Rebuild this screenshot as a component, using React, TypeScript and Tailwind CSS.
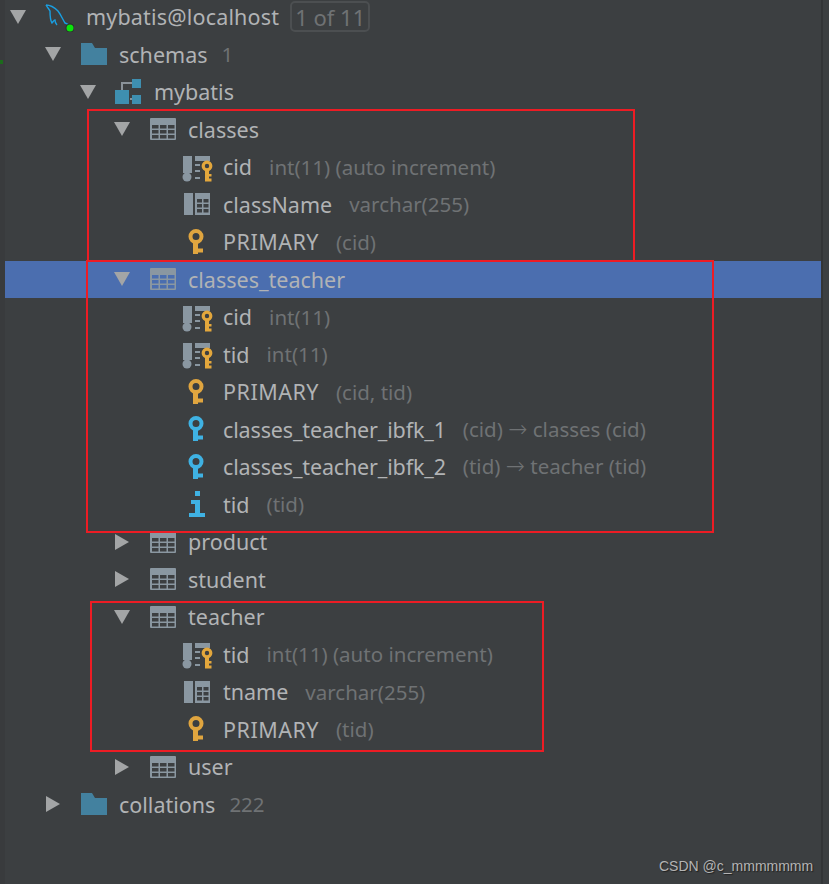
import React from 'react'

// ==================================================
// DATABASE TREE
// ==================================================

type IconName = 'mysql' | 'folder' | 'schema' | 'table' | 'pkcol' | 'col' | 'key' | 'fkey' | 'index'

interface TreeRow {
  depth: 0 | 1 | 2 | 3 | 4
  arrow?: 'open' | 'closed'
  icon: IconName
  name: string
  detail?: React.ReactNode
  selected?: boolean
  badge?: string
}

function To() {
  return <span className="font-['DejaVu_Sans',sans-serif] text-[23px] font-light leading-none">→</span>
}

const ROWS: TreeRow[] = [
  { depth: 0, arrow: 'open', icon: 'mysql', name: 'mybatis@localhost', badge: '1 of 11' },
  { depth: 1, arrow: 'open', icon: 'folder', name: 'schemas', detail: '1' },
  { depth: 2, arrow: 'open', icon: 'schema', name: 'mybatis' },
  { depth: 3, arrow: 'open', icon: 'table', name: 'classes' },
  { depth: 4, icon: 'pkcol', name: 'cid', detail: 'int(11) (auto increment)' },
  { depth: 4, icon: 'col', name: 'className', detail: 'varchar(255)' },
  { depth: 4, icon: 'key', name: 'PRIMARY', detail: '(cid)' },
  { depth: 3, arrow: 'open', icon: 'table', name: 'classes_teacher', selected: true },
  { depth: 4, icon: 'pkcol', name: 'cid', detail: 'int(11)' },
  { depth: 4, icon: 'pkcol', name: 'tid', detail: 'int(11)' },
  { depth: 4, icon: 'key', name: 'PRIMARY', detail: '(cid, tid)' },
  { depth: 4, icon: 'fkey', name: 'classes_teacher_ibfk_1', detail: <>(cid) <To /> classes (cid)</> },
  { depth: 4, icon: 'fkey', name: 'classes_teacher_ibfk_2', detail: <>(tid) <To /> teacher (tid)</> },
  { depth: 4, icon: 'index', name: 'tid', detail: '(tid)' },
  { depth: 3, arrow: 'closed', icon: 'table', name: 'product' },
  { depth: 3, arrow: 'closed', icon: 'table', name: 'student' },
  { depth: 3, arrow: 'open', icon: 'table', name: 'teacher' },
  { depth: 4, icon: 'pkcol', name: 'tid', detail: 'int(11) (auto increment)' },
  { depth: 4, icon: 'col', name: 'tname', detail: 'varchar(255)' },
  { depth: 4, icon: 'key', name: 'PRIMARY', detail: '(tid)' },
  { depth: 3, arrow: 'closed', icon: 'table', name: 'user' },
  { depth: 1, arrow: 'closed', icon: 'folder', name: 'collations', detail: '222' }
]

const INDENT = {
  0: 'pl-[10px]',
  1: 'pl-[45px]',
  2: 'pl-[80px]',
  3: 'pl-[114px]',
  4: 'pl-[148px]'
}

const LABEL_GAP = {
  0: 'ml-[13px]',
  1: 'ml-[11px]',
  2: 'ml-[11px]',
  3: 'ml-[11px]',
  4: 'ml-[12px]'
}

// name widths differ a little from the original UI font
const TRACKING: Record<string, string> = {
  'mybatis@localhost': 'tracking-[0.18px]',
  PRIMARY: 'tracking-[0.5px]',
  classes_teacher_ibfk_1: 'tracking-[-0.15px]',
  classes_teacher_ibfk_2: 'tracking-[-0.15px]'
}

function Arrow({ kind }: { kind?: 'open' | 'closed' }) {
  return (
    <svg width="16" height="16" viewBox="0 0 16 16" className="shrink-0">
      {kind === 'open' && <polygon points="0,1 16,1 8,15" fill="#a3a5a6" />}
      {kind === 'closed' && <polygon points="1,0 15,8 1,16" fill="#a3a5a6" />}
    </svg>
  )
}

function TreeIcon({ name, cell }: { name: IconName; cell: string }) {
  if (name === 'mysql') {
    return (
      <svg width="30" height="30" viewBox="0 0 30 30" className="shrink-0">
        <path
          d="M2 3C6 3 11 6 14 9C17 13 19 18 21 21C23 22 26 23 28 25 M2 3C3 5 5 7 6 9C6 13 6 18 8 21C9 20 10 18 11 18C11 20 12 22 13 23"
          fill="none"
          stroke="#1a9ee0"
          strokeWidth="1.400"
        />
        <circle cx="26" cy="26" r="4.500" fill="#2b2d2e" />
        <circle cx="26" cy="26" r="3.500" fill="#0be40b" />
      </svg>
    )
  }
  if (name === 'folder') {
    return (
      <svg width="28" height="22" viewBox="0 0 28 22" className="shrink-0">
        <path d="M1 0h11l3 5h12v17H1z" fill="#43819f" />
      </svg>
    )
  }
  if (name === 'schema') {
    return (
      <svg width="28" height="26" viewBox="0 0 28 26" className="shrink-0">
        <path d="M7 11V4h16 M15 20h8" fill="none" stroke="#8a9299" strokeWidth="2" />
        <rect x="0" y="11" width="14" height="14" fill="#3e8fb0" />
        <rect x="17" y="0" width="9" height="9" fill="#3e8fb0" />
        <rect x="17" y="16" width="9" height="9" fill="#3e8fb0" />
      </svg>
    )
  }
  if (name === 'table') {
    return (
      <svg width="28" height="24" viewBox="0 0 28 24" className="shrink-0">
        <rect x="1" y="1" width="26" height="22" rx="1" fill="#8a97a1" />
        {[8, 13, 18].map(y =>
          [3, 11, 19].map(x => <rect key={`${x}-${y}`} x={x} y={y} width="6.500" height="3.500" fill={cell} />)
        )}
      </svg>
    )
  }
  if (name === 'col') {
    return (
      <svg width="28" height="24" viewBox="0 0 28 24" className="shrink-0">
        <rect x="1" y="1" width="9" height="22" fill="#8a97a1" />
        <rect x="12" y="1" width="15" height="22" fill="#8a97a1" />
        {[7, 12, 17].map(y => (
          <React.Fragment key={y}>
            <rect x="14" y={y} width="5" height="3.500" fill={cell} />
            <rect x="20.500" y={y} width="5" height="3.500" fill={cell} />
          </React.Fragment>
        ))}
      </svg>
    )
  }
  if (name === 'pkcol') {
    return (
      <svg width="34" height="30" viewBox="-2 0 34 30" className="shrink-0">
        <rect x="1" y="4" width="9" height="17" fill="#8a97a1" />
        <circle cx="5" cy="25" r="4.500" fill="#8a97a1" />
        <path d="M13 4h15v5H13z" fill="#8a97a1" />
        <path d="M13 12h5v2h-5z M13 18h5v2h-5z M13 25h5v2h-5z" fill="#8a97a1" />
        <circle cx="25" cy="14" r="3.800" fill="none" stroke="#e3a73c" strokeWidth="3.200" />
        <path d="M23 17h4v12.500h-4z M26 22h3.500v2.500H26z M26 26.500h3.500v3H26z" fill="#e3a73c" />
      </svg>
    )
  }
  if (name === 'index') {
    return (
      <svg width="28" height="26" viewBox="0 0 28 26" className="shrink-0">
        <path d="M12 0h5v5h-5z M8 9h9v13h5v4H6v-4h6v-9H8z" fill="#3fb2e3" />
      </svg>
    )
  }
  const color = name === 'key' ? '#e0a53f' : '#3fb2e3'
  return (
    <svg width="28" height="28" viewBox="0 0 28 28" className="shrink-0">
      <circle cx="13" cy="8.500" r="5.500" fill="none" stroke={color} strokeWidth="4" />
      <path d="M10 14h5v12h-5z M15 20.500h5v4h-5z" fill={color} />
    </svg>
  )
}

function TreeItem({ row }: { row: TreeRow }) {
  const cell = row.selected ? '#4b6eaf' : '#3c3f41'
  return (
    <div className={`flex h-[37.5px] items-center ${INDENT[row.depth]} ${row.selected ? 'bg-[#4b6eaf]' : ''}`}>
      <Arrow kind={row.arrow} />
      <div className="ml-[19px] flex w-[28px] shrink-0 items-center justify-center">
        <TreeIcon name={row.icon} cell={cell} />
      </div>
      <span className={`${LABEL_GAP[row.depth]} text-[21.5px] text-[#b1b3b5] ${TRACKING[row.name] ?? ''}`}>{row.name}</span>
      {row.detail && (
        <span className={`${row.depth === 1 ? 'ml-[14px]' : 'ml-[17px]'} text-[20.5px] text-[#6f7274]`}>{row.detail}</span>
      )}
      {row.badge && (
        <span className="ml-[11px] flex h-[31px] items-center rounded-[5px] border-2 border-[#4c4f51] px-[3px] text-[22px] text-[#6f7274]">
          {row.badge}
        </span>
      )}
    </div>
  )
}

function RedBox({ className }: { className: string }) {
  return <div className={`pointer-events-none absolute border-2 border-[#ed1c24] ${className}`} />
}

export default function App() {
  return (
    <div className="relative h-[884px] w-[829px] overflow-hidden bg-[#3c3f41] font-['Noto_Sans',sans-serif] leading-none">
      <div className="flex h-full">
        {/* left gutter */}
        <div className="relative w-[5px] shrink-0 bg-[#393b3d]">
          <div className="absolute left-0 top-[60px] h-[4px] w-[3px] bg-[#1c6b1c]" />
        </div>

        <div className="-ml-[5px] -mt-[2px] min-w-0 flex-1">
          {ROWS.map((row, i) => (
            <TreeItem key={i} row={row} />
          ))}
        </div>

        {/* right gutter */}
        <div className="w-[8px] shrink-0 border-l-2 border-[#333537] bg-[#3c3f41]" />
      </div>

      <RedBox className="left-[87px] top-[109px] h-[153px] w-[548px]" />
      <RedBox className="left-[86px] top-[260px] h-[273px] w-[628px]" />
      <RedBox className="left-[90px] top-[601px] h-[151px] w-[454px]" />

      <span className="absolute left-[659px] top-[859px] font-['Liberation_Sans',sans-serif] text-[14px] text-[#b4b4b4] [text-shadow:1px_1px_1px_#222]">
        CSDN @c_mmmmmmm
      </span>
    </div>
  )
}
